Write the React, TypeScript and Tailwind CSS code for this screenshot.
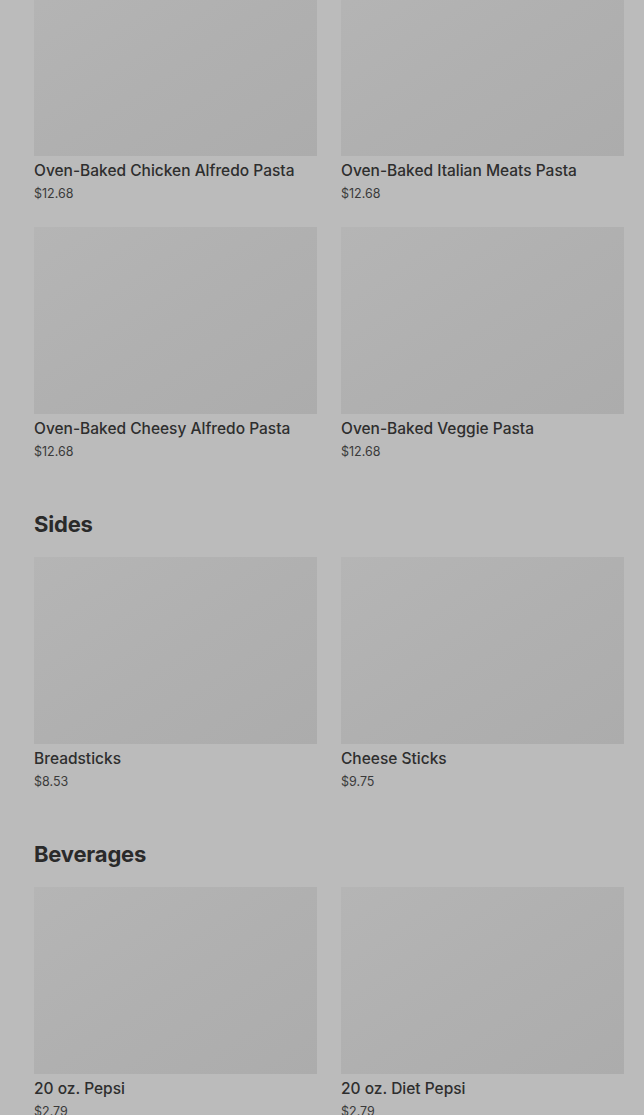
const sections = [
  {
    title: null as string | null,
    items: [
      { name: "Oven-Baked Chicken Alfredo Pasta", price: "$12.68" },
      { name: "Oven-Baked Italian Meats Pasta", price: "$12.68" },
      { name: "Oven-Baked Cheesy Alfredo Pasta", price: "$12.68" },
      { name: "Oven-Baked Veggie Pasta", price: "$12.68" },
    ],
  },
  {
    title: "Sides",
    items: [
      { name: "Breadsticks", price: "$8.53" },
      { name: "Cheese Sticks", price: "$9.75" },
    ],
  },
  {
    title: "Beverages",
    items: [
      { name: "20 oz. Pepsi", price: "$2.79" },
      { name: "20 oz. Diet Pepsi", price: "$2.79" },
    ],
  },
];

const MenuCard = ({ name, price }: { name: string; price: string }) => (
  <div className="flex flex-col">
    <div className="h-[187px] w-full bg-gradient-to-br from-[#b5b5b5] via-[#b0b0b0] to-[#acacac]"></div>
    <div className="mt-[5px] text-[15.5px] leading-5 font-medium text-[#2e2e2e]">{name}</div>
    <div className="mt-[3px] text-[12.5px] leading-[19px] text-[#3a3a3a]">{price}</div>
  </div>
);

export default function App() {
  return (
    <div
      className="h-[1115px] overflow-hidden bg-[#bbbbbb]"
      style={{ fontFamily: "Inter, 'Noto Sans', sans-serif" }}
    >
      <div className="-mt-[31px] pl-[34px] pr-[20px] flex flex-col gap-[49px]">
        {sections.map((section, i) => (
          <section key={i} className="flex flex-col">
            {section.title && (
              <h2 className="text-[22px] leading-7 font-bold text-[#2a2a2a] tracking-[-0.2px] mb-[19px]">
                {section.title}
              </h2>
            )}
            <div className="grid grid-cols-2 gap-x-6 gap-y-[24px]">
              {section.items.map((item) => (
                <MenuCard key={item.name} name={item.name} price={item.price} />
              ))}
            </div>
          </section>
        ))}
      </div>
    </div>
  );
}
